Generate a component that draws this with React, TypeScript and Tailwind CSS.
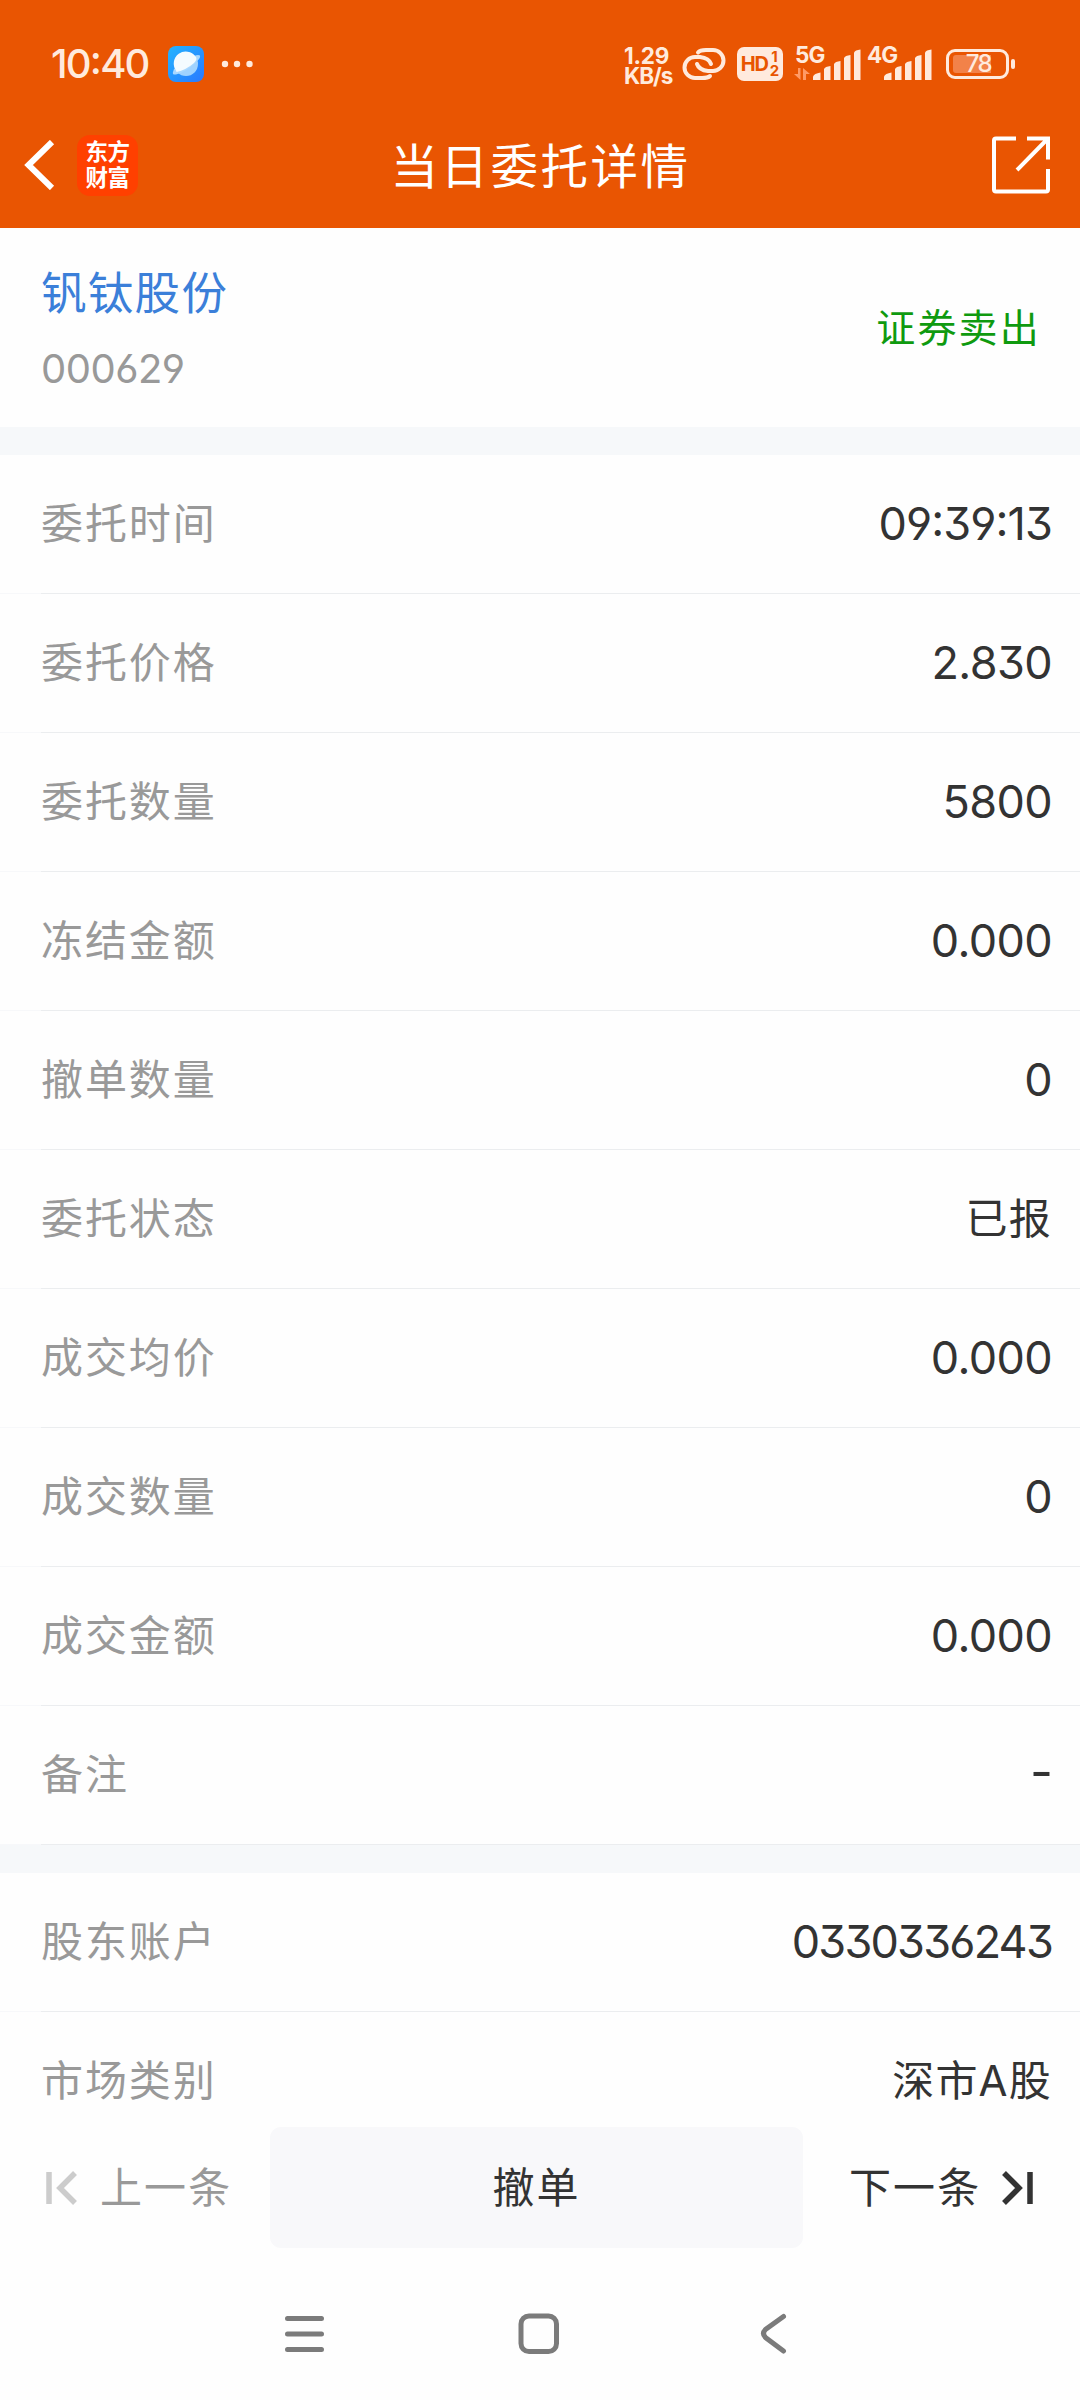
interface DetailRow {
  label: string
  value: string
}

const orderRows: DetailRow[] = [
  { label: '委托时间', value: '09:39:13' },
  { label: '委托价格', value: '2.830' },
  { label: '委托数量', value: '5800' },
  { label: '冻结金额', value: '0.000' },
  { label: '撤单数量', value: '0' },
  { label: '委托状态', value: '已报' },
  { label: '成交均价', value: '0.000' },
  { label: '成交数量', value: '0' },
  { label: '成交金额', value: '0.000' },
  { label: '备注', value: '-' },
]

const accountRows: DetailRow[] = [
  { label: '股东账户', value: '0330336243' },
  { label: '市场类别', value: '深市A股' },
]

// open 6 and 9, flat-top 3, raised colon and dash
const digits = "[font-feature-settings:'cv03','cv04','cv09','case']"

// long numbers are set tighter, Chinese values a little smaller
function valueClass(value: string) {
  if (/[一-龥]/.test(value)) return 'text-[42px] tracking-[1.2px]'
  if (value === '-') return 'text-[50px] -mr-px pb-[2px]'
  if (value.length > 8) return 'text-[45px] tracking-[-1.8px] pb-[2px]'
  if (value.length > 5) return 'text-[45px] tracking-[-0.9px] pb-[2px]'
  return 'text-[45px] tracking-[-0.6px] pb-[2px]'
}

function SignalBars() {
  return (
    <svg className="w-[48px] h-[32px]" viewBox="0 0 48 32" fill="#ffeadd">
      <path d="M0 31V27.5Q1 24.5 7.5 23.5V31Z" />
      <path d="M11 31V20Q12 17.5 17.5 17V31Z" />
      <path d="M21 31V15Q22 12.5 27.5 12V31Z" />
      <path d="M31 31V9Q32 6.5 37.5 6V31Z" />
      <path d="M41 31V3.5Q42 1 47.5 0.5V31Z" />
    </svg>
  )
}

function StatusBar() {
  return (
    <div className="h-[102px] pt-[26px] flex justify-between text-[#ffeadd]">
      <div className="flex items-center h-[76px] pl-[51px]">
        <span className={`w-[117px] text-[40px] font-medium leading-none tracking-[-1.8px] ${digits}`}>10:40</span>
        <svg className="w-[36px] h-[36px]" viewBox="0 0 36 36">
          <defs>
            <linearGradient id="app" x1="0" y1="0" x2="1" y2="1">
              <stop offset="0" stopColor="#23b4ff" />
              <stop offset="1" stopColor="#2a78ff" />
            </linearGradient>
          </defs>
          <rect width="36" height="36" rx="8" fill="url(#app)" />
          <circle cx="18" cy="18" r="12" fill="#9fd2ff" />
          <path d="M6 23L5 26Q4 29 8 28.5Q18 26 27 17Q33 12 32 9.5Q30 8.5 26 10Z" fill="#a9d8ff" />
          <path d="M8 24.5A12 12 0 0 1 27.5 10.5Q30 13 26 17Q18 24 8.5 26Z" fill="#f4fbff" />
        </svg>
        <svg className="w-[34px] h-[8px] ml-[17px]" viewBox="0 0 34 8" fill="#ffeadd">
          <circle cx="4" cy="4" r="3.2" />
          <circle cx="16" cy="4" r="3.2" />
          <circle cx="28.5" cy="4" r="3.2" />
        </svg>
      </div>

      <div className="flex items-start h-[76px] pt-[20px] w-[456px]">
        <div className="w-[58px] text-[22.5px] leading-[19.5px] font-bold">
          <div className="tracking-[-0.2px]">1.29</div>
          <div className="tracking-[-1px]">KB/s</div>
        </div>
        <svg className="w-[44px] h-[34px] mt-px" viewBox="0 0 44 34" fill="none" stroke="#ffeadd" strokeWidth="4" strokeLinecap="round">
          <path d="M16 5.5Q18 3 24 3H31A10.5 10.5 0 0 1 31 24H26Q17 23 15 17" />
          <path d="M28 29Q26 31 20 31H13A10.5 10.5 0 0 1 13 10H18Q27 11 29 17" />
        </svg>
        <div className="w-[46px] h-[34px] mt-px ml-[11px] rounded-[7px] bg-[#ffeadd] text-[#e85500] flex items-center justify-center font-bold">
          <span className="text-[20px] leading-none tracking-[-1.2px]">HD</span>
          <span className="text-[15px] leading-[14px] ml-[2px] text-center">
            <span className="block">1</span>
            <span className="block">2</span>
          </span>
        </div>
        <div className="relative w-[17px] h-[36px] ml-[12px]">
          <span className="absolute left-0 top-0 text-[22.5px] leading-[17px] font-bold tracking-[-1px]">5G</span>
          <svg className="absolute left-[-1px] top-[22px] w-[16px] h-[12px]" viewBox="0 0 16 12" fill="#ff9a66">
            <path d="M4 0H6.5V12L0 6H4ZM9 0L16 6H12V12H9Z" />
          </svg>
        </div>
        <div className="pt-[3px] ml-px"><SignalBars /></div>
        <div className="relative w-[23px] h-[36px]">
          <span className="absolute left-[6px] top-0 text-[22.5px] leading-[17px] font-bold tracking-[-1px]">4G</span>
        </div>
        <div className="pt-[3px]"><SignalBars /></div>
        <div className="w-[63px] h-[30px] mt-[3px] ml-[14px] rounded-[9px] border-[3px] border-[#ffeadd] p-[3px] pl-[4px]">
          <div className="w-[38px] h-[18px] rounded-l-[3px] bg-[#f28249] flex items-center justify-end">
            <span className="text-[24px] leading-none font-medium tracking-[-1.6px]">78</span>
          </div>
        </div>
        <div className="w-[4px] h-[10px] mt-[13px] ml-[2px] rounded-[2px] bg-[#ffeadd]" />
      </div>
    </div>
  )
}

function TitleBar() {
  return (
    <div className="h-[126px] flex items-center justify-between pl-[24px] pr-[29px]">
      <div className="flex items-center w-[240px]">
        <svg className="w-[31px] h-[50px]" viewBox="0 0 31 50" fill="none" stroke="#fff" strokeWidth="6">
          <path d="M28 2L4.5 25L28 48" />
        </svg>
        <div className="w-[61px] h-[61px] ml-[22px] rounded-[13px] bg-[#ff4000] text-white text-[22.5px] leading-[26px] font-bold text-center pt-[4px] tracking-[-0.5px]">
          <div>东方</div>
          <div>财富</div>
        </div>
      </div>
      <h1 className="pl-[6px] pt-[3px] text-[47.5px] leading-none text-white tracking-[2.5px]">当日委托详情</h1>
      <div className="w-[240px] flex justify-end">
        <svg className="w-[60px] h-[60px]" viewBox="0 0 60 60" fill="none" stroke="#fff" strokeWidth="4">
          <path d="M25 3.5H5Q3 3.5 3 5.5V54.5Q3 56.5 5 56.5H55Q57 56.5 57 54.5V34" />
          <path d="M36 3.5H57V24.5M56 4.5L26 35" />
        </svg>
      </div>
    </div>
  )
}

function Row({ label, value }: DetailRow) {
  return (
    <div className="h-[139px] shrink-0 flex flex-col">
      <div className="flex-1 flex items-center justify-between pl-[41px] pr-[28px]">
        <span className="text-[42px] leading-none text-[#999] tracking-[1.9px]">{label}</span>
        <span className={`leading-none text-[#333] ${valueClass(value)} ${digits}`}>{value}</span>
      </div>
      <div className="h-px flex">
        <div className="w-[41px] bg-[#f7f8fa]" />
        <div className="flex-1 bg-[#ebedef]" />
      </div>
    </div>
  )
}

function ActionBar() {
  return (
    <div className="h-[121px] flex items-center text-[42px] leading-none text-[#333]">
      <div className="w-[270px] flex items-center pl-[46px] text-[#999]">
        <svg className="w-[32px] h-[34px] mr-[22px]" viewBox="0 0 32 34" fill="none" stroke="#ccc" strokeWidth="5.5">
          <path d="M3 1V33M29 2L14 17L29 32" />
        </svg>
        <span className="tracking-[2.1px]">上一条</span>
      </div>
      <button className="w-[533px] h-[121px] rounded-[11px] bg-[#f8f8fa] tracking-[1.9px]">撤单</button>
      <div className="flex-1 flex items-center pl-[46px]">
        <span className="tracking-[2.1px]">下一条</span>
        <svg className="w-[32px] h-[34px] ml-[20px]" viewBox="0 0 32 34" fill="none" stroke="#333" strokeWidth="5.5">
          <path d="M29 1V33M3 2L18 17L3 32" />
        </svg>
      </div>
    </div>
  )
}

function NavBar() {
  return (
    <div className="flex-1 flex items-center pt-[20px] pl-[284px]">
      <svg className="w-[41px] h-[42px]" viewBox="0 0 41 42" fill="none" stroke="#7b7b7b" strokeWidth="5" strokeLinecap="round">
        <path d="M3.5 5.5H37.5M3.5 21H37.5M3.5 36.5H37.5" />
      </svg>
      <svg className="w-[42px] h-[42px] ml-[193px]" viewBox="0 0 42 42" fill="none" stroke="#7b7b7b" strokeWidth="5">
        <rect x="3" y="3" width="35.5" height="35.5" rx="8" />
      </svg>
      <svg className="w-[28px] h-[42px] ml-[200px]" viewBox="0 0 28 42" fill="none" stroke="#7b7b7b" strokeWidth="5" strokeLinecap="round">
        <path d="M23.5 3.5L5.5 16.5Q1.5 20.5 5.5 24.5L23.5 38" />
      </svg>
    </div>
  )
}

export default function App() {
  return (
    <div className="w-[1080px] h-[2400px] overflow-hidden flex flex-col bg-[#fefefe] font-[Inter,'Noto_Sans_CJK_SC',sans-serif]">
      <header className="h-[228px] shrink-0 bg-[#e95502]">
        <StatusBar />
        <TitleBar />
      </header>

      <section className="h-[199px] shrink-0 flex items-center justify-between pl-[41px] pr-[39px]">
        <div className="flex flex-col pt-[8px]">
          <span className="text-[45.5px] leading-[60px] text-[#3b7fd9] tracking-[1.3px]">钒钛股份</span>
          <span className={`mt-[15px] text-[40px] leading-[60px] text-[#999] tracking-[-0.5px] ${digits}`}>000629</span>
        </div>
        <span className="text-[39px] leading-none text-[#0f9a0f] tracking-[2.2px]">证券卖出</span>
      </section>

      <div className="h-[28px] shrink-0 bg-[#f6f8fa]" />
      {orderRows.map((row) => <Row key={row.label} {...row} />)}

      <div className="h-[28px] shrink-0 bg-[#f6f8fa]" />
      {/* the last row runs under the action bar */}
      <div className="h-[254px] shrink-0 overflow-hidden">
        {accountRows.map((row) => <Row key={row.label} {...row} />)}
      </div>

      <ActionBar />
      <NavBar />
    </div>
  )
}
